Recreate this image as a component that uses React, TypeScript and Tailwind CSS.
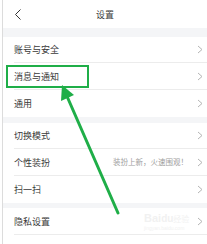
const font = { fontFamily: '"Noto Sans CJK SC", "Noto Sans", sans-serif' };

type Item = { label: string; h: string; hint?: string; last?: boolean };

const Chevron = () => (
  <svg width="6" height="9" viewBox="0 0 6 9" className="shrink-0">
    <polyline points="1,1 5,4.5 1,8" fill="none" stroke="#b5b5b5" strokeWidth="1" />
  </svg>
);

const Row = ({ item }: { item: Item }) => (
  <div className={`pl-[11px] bg-white ${item.h}`}>
    <div
      className={`h-full flex items-center justify-between pr-[4px] ${
        item.last ? '' : 'border-b border-[#ececec]'
      }`}
    >
      <span className="text-[9px] leading-none text-[#3a3a3a]">{item.label}</span>
      <div className="flex items-center gap-[9px]">
        {item.hint && <span className="text-[7.5px] leading-none text-[#a0a0a0]">{item.hint}</span>}
        <Chevron />
      </div>
    </div>
  </div>
);

const Band = ({ h }: { h: string }) => <div className={`bg-[#f4f5f7] ${h}`} />;

export default function App() {
  const groupA: Item[] = [
    { label: '账号与安全', h: 'h-[26px]' },
    { label: '消息与通知', h: 'h-[27px]' },
    { label: '通用', h: 'h-[27px]', last: true },
  ];
  const groupB: Item[] = [
    { label: '切换模式', h: 'h-[26px]' },
    { label: '个性装扮', h: 'h-[27px]', hint: '装扮上新，火速围观！' },
    { label: '扫一扫', h: 'h-[27px]', last: true },
  ];

  return (
    <div className="relative w-[207px] h-[244px] overflow-hidden bg-white" style={font}>
      <div className="ml-[2px] h-full border-l border-[#dcdcdc] flex flex-col">
        {/* header */}
        <div className="h-[28px] flex items-center relative">
          <svg width="8" height="11" viewBox="0 0 8 11" className="ml-[11px]">
            <polyline points="6.5,0.5 1.5,5.5 6.5,10.5" fill="none" stroke="#333" strokeWidth="1" />
          </svg>
          <span className="absolute left-0 right-0 text-center text-[9px] leading-none text-[#3a3a3a]">
            设置
          </span>
        </div>

        <Band h="h-[9px]" />
        {groupA.map((i) => (
          <Row key={i.label} item={i} />
        ))}
        <Band h="h-[6px]" />
        {groupB.map((i) => (
          <Row key={i.label} item={i} />
        ))}
        <Band h="h-[5px]" />
        <Row item={{ label: '隐私设置', h: 'h-[27px]' }} />
        <div className="flex-1" />
      </div>

      {/* highlight box */}
      <div className="absolute left-[6px] top-[65px] w-[83px] h-[23px] border-2 border-[#1fae48]" />

      {/* arrow */}
      <svg className="absolute left-0 top-0" width="207" height="244" viewBox="0 0 207 244">
        <line x1="66" y1="94" x2="118" y2="213" stroke="#1fae48" strokeWidth="3" strokeLinecap="round" />
        <polygon points="62,85 74,95 61,101" fill="#1fae48" />
      </svg>

      {/* watermark */}
      <div className="absolute left-[144px] top-[213px] flex flex-col items-start opacity-25">
        <span className="text-[11px] leading-none font-bold text-[#c8c8c8]" style={{ fontFamily: '"Liberation Sans", sans-serif' }}>
          Bai<span className="text-[10px]">du</span>
          <span className="text-[8px] font-normal" style={font}>经验</span>
        </span>
        <span className="text-[5px] leading-none text-[#c8c8c8] mt-[2px]" style={{ fontFamily: '"Liberation Sans", sans-serif' }}>
          jingyan.baidu.com
        </span>
      </div>
    </div>
  );
}
